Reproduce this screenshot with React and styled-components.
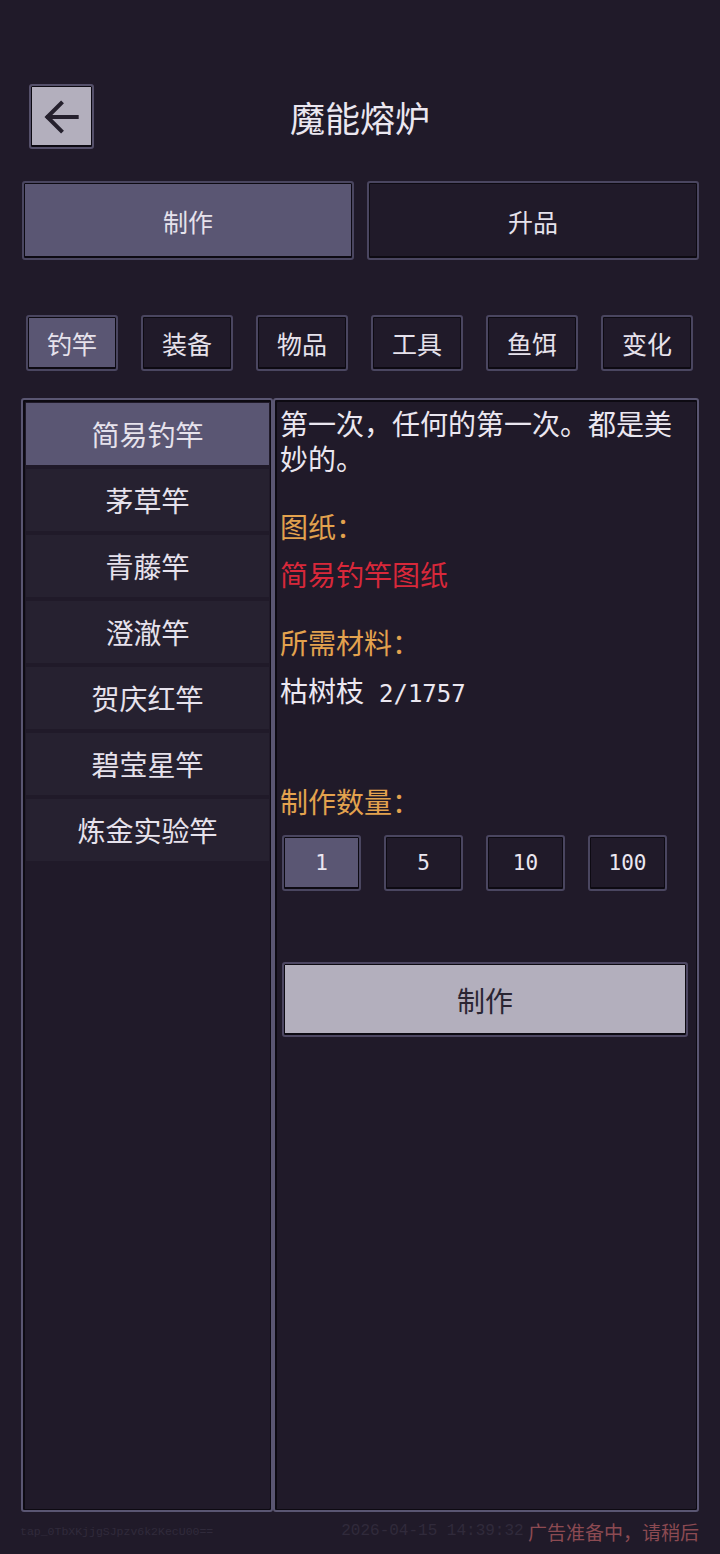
import React, { useState } from 'react';
import styled, { createGlobalStyle, css } from 'styled-components';

const GlobalStyle = createGlobalStyle`
  html, body {
    margin: 0;
    padding: 0;
    background: #201a29;
  }
  body {
    font-family: "Noto Sans CJK SC", "Noto Sans", sans-serif;
    color: #e6e2ec;
  }
`;

const pixelBox = css`
  box-sizing: border-box;
  border: 2px solid #4a4660;
  border-radius: 3px;
  box-shadow: inset 0 0 0 1px #0d0a12, inset 0 -2px 0 #0d0a12;
`;

const CATEGORIES = ['钓竿', '装备', '物品', '工具', '鱼饵', '变化'];
const RODS = ['简易钓竿', '茅草竿', '青藤竿', '澄澈竿', '贺庆红竿', '碧莹星竿', '炼金实验竿'];
const AMOUNTS = ['1', '5', '10', '100'];

export default function App() {
  const [tab, setTab] = useState(0);
  const [category, setCategory] = useState(0);
  const [rod, setRod] = useState(0);
  const [amount, setAmount] = useState(0);

  return (
    <Page>
      <GlobalStyle />
      <Header>
        <BackButton aria-label="返回">
          <svg width="44" height="44" viewBox="0 0 24 24" fill="none" stroke="#25202d" strokeWidth="2.2" strokeLinecap="square">
            <path d="M20 12H4.5" />
            <path d="M11.5 4.5L4 12l7.5 7.5" />
          </svg>
        </BackButton>
        <Title>魔能熔炉</Title>
        <Spacer />
      </Header>

      <Tabs>
        {['制作', '升品'].map((t, i) => (
          <Tab key={t} $active={tab === i} onClick={() => setTab(i)}>{t}</Tab>
        ))}
      </Tabs>

      <Categories>
        {CATEGORIES.map((c, i) => (
          <CategoryButton key={c} $active={category === i} onClick={() => setCategory(i)}>{c}</CategoryButton>
        ))}
      </Categories>

      <Panel>
        <RodList>
          {RODS.map((r, i) => (
            <RodItem key={r} $active={rod === i} onClick={() => setRod(i)}>{r}</RodItem>
          ))}
        </RodList>
        <Detail>
          <Description>第一次，任何的第一次。都是美妙的。</Description>
          <Label $gap={33}>图纸：</Label>
          <Blueprint>简易钓竿图纸</Blueprint>
          <Label $gap={33}>所需材料：</Label>
          <Material>枯树枝<Num>2/1757</Num></Material>
          <Label $gap={72}>制作数量：</Label>
          <Amounts>
            {AMOUNTS.map((a, i) => (
              <AmountButton key={a} $active={amount === i} onClick={() => setAmount(i)}>{a}</AmountButton>
            ))}
          </Amounts>
          <CraftButton>制作</CraftButton>
        </Detail>
      </Panel>

      <Footer>
        <DeviceId>tap_0TbXKjjgSJpzv6k2KecU00==</DeviceId>
        <Stamp>2026-04-15 14:39:32</Stamp>
        <AdNotice>广告准备中，请稍后</AdNotice>
      </Footer>
    </Page>
  );
}

const Page = styled.div`
  box-sizing: border-box;
  width: 720px;
  min-height: 1554px;
  padding: 84px 21px 0;
  display: flex;
  flex-direction: column;
`;

const Header = styled.header`
  display: grid;
  grid-template-columns: 65px 1fr 65px;
  align-items: center;
  padding: 0 8px;
  height: 65px;
`;

const BackButton = styled.button`
  ${pixelBox};
  width: 65px;
  height: 65px;
  padding: 0;
  display: flex;
  align-items: center;
  justify-content: center;
  background: #b3afbd;
  border-color: #55506a;
  cursor: pointer;
`;

const Spacer = styled.div``;

const Title = styled.h1`
  margin: 0;
  text-align: center;
  font-size: 35px;
  font-weight: 400;
  color: #ebe7f0;
  line-height: 1;
`;

const Tabs = styled.nav`
  display: flex;
  gap: 13px;
  margin-top: 32px;
  padding-left: 1px;
`;

const Tab = styled.button`
  ${pixelBox};
  flex: 1;
  height: 79px;
  font-family: inherit;
  font-size: 25px;
  color: #e6e2ec;
  background: ${(p) => (p.$active ? '#5a5673' : '#201a29')};
  cursor: pointer;
`;

const Categories = styled.div`
  display: flex;
  justify-content: space-between;
  margin-top: 55px;
  padding: 0 6px 0 5px;
`;

const CategoryButton = styled.button`
  ${pixelBox};
  width: 92px;
  height: 56px;
  padding: 0;
  font-family: inherit;
  font-size: 25px;
  color: #e6e2ec;
  background: ${(p) => (p.$active ? '#5a5673' : '#201a29')};
  cursor: pointer;
`;

const Panel = styled.section`
  display: flex;
  margin-top: 27px;
  height: 1114px;
`;

const panelFrame = css`
  box-sizing: border-box;
  border: 2px solid #5a5672;
  border-radius: 3px;
  box-shadow: inset 2px 2px 0 #0d0a12, inset -1px -1px 0 #0d0a12;
`;

const RodList = styled.ul`
  ${panelFrame};
  width: 252px;
  margin: 0;
  padding: 3px 2px 0 3px;
  list-style: none;
  display: flex;
  flex-direction: column;
  gap: 4px;
`;

const RodItem = styled.li`
  height: 62px;
  display: flex;
  align-items: center;
  justify-content: center;
  font-size: 28px;
  color: #e6e2ec;
  background: ${(p) => (p.$active ? '#5a5673' : '#262130')};
  cursor: pointer;
`;

const Detail = styled.div`
  ${panelFrame};
  flex: 1;
  padding: 6px 5px 0 5px;
  display: flex;
  flex-direction: column;
  font-size: 28px;
  line-height: 35px;
`;

const Description = styled.p`
  margin: 0;
  color: #ebe7f0;
`;

const Label = styled.div`
  margin-top: ${(p) => p.$gap}px;
  color: #e3a24e;
`;

const Blueprint = styled.div`
  margin-top: 13px;
  color: #d8283a;
`;

const Material = styled.div`
  margin-top: 13px;
  color: #ebe7f0;
`;

const Num = styled.span`
  margin-left: 15px;
  font-family: "DejaVu Sans Mono", "Liberation Mono", monospace;
  font-size: 24px;
`;

const Amounts = styled.div`
  display: flex;
  gap: 23px;
  margin-top: 16px;
  padding-left: 2px;
`;

const AmountButton = styled.button`
  ${pixelBox};
  width: 79px;
  height: 56px;
  padding: 0;
  font-family: "DejaVu Sans Mono", "Liberation Mono", monospace;
  font-size: 21px;
  color: #ebe7f0;
  background: ${(p) => (p.$active ? '#5a5673' : '#201a29')};
  cursor: pointer;
`;

const CraftButton = styled.button`
  ${pixelBox};
  margin: 71px 0 0 2px;
  width: 406px;
  height: 75px;
  font-family: inherit;
  font-size: 28px;
  color: #2a2533;
  background: #b3afbd;
  border-color: #4d4762;
  cursor: pointer;
`;

const Footer = styled.footer`
  display: flex;
  align-items: center;
  height: 38px;
  padding-bottom: 4px;
`;

const DeviceId = styled.span`
  font-family: "Liberation Mono", monospace;
  font-size: 11.5px;
  color: #302a3b;
  margin-left: -1px;
`;

const Stamp = styled.span`
  font-family: "Liberation Mono", monospace;
  font-size: 16px;
  color: #302a3b;
  margin-left: 128px;
`;

const AdNotice = styled.span`
  margin-left: auto;
  font-size: 19px;
  color: #8c4a52;
`;
